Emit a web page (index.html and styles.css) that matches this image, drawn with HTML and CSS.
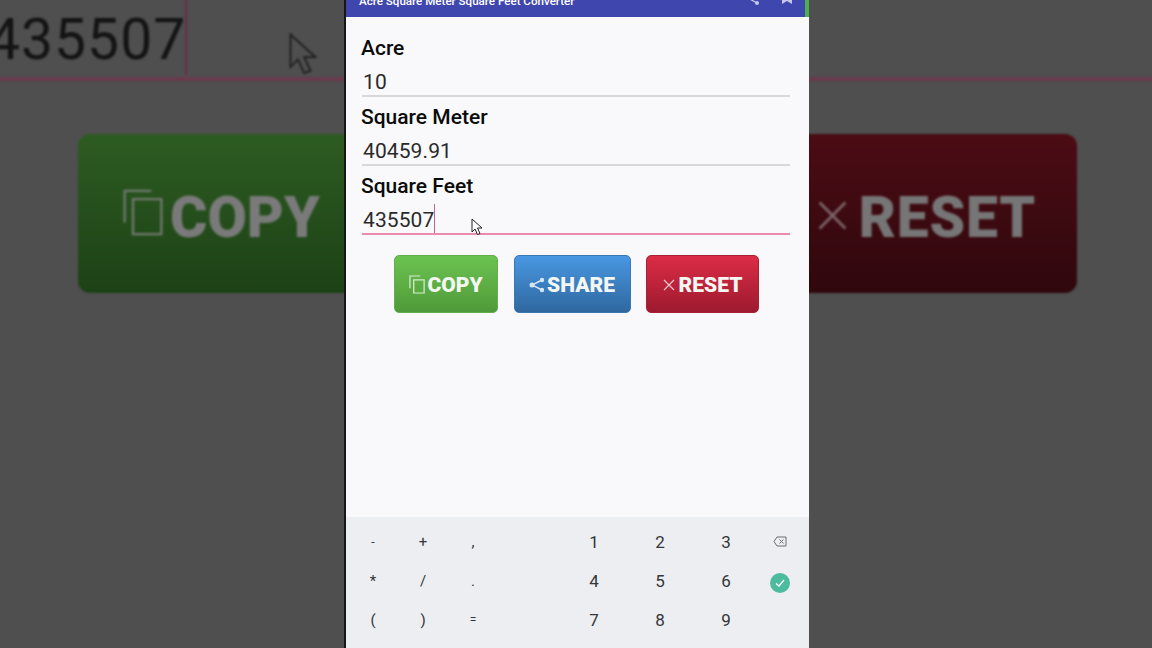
FILE: index.html
```html
<!DOCTYPE html>
<html>
<head>
<meta charset="UTF-8">
<title>Acre Square Meter Square Feet Converter</title>
<link rel="stylesheet" href="styles.css">
</head>
<body>
<div class="stage">

	<!-- blurred, zoomed copy of the app behind the phone -->
	<div class="backdrop">
		<div class="back-field">
			<span class="back-value">435507</span>
			<span class="back-caret"></span>
			<svg class="back-pointer" viewBox="0 0 12 18" width="30" height="45"><path d="M1 1v13l3-3 2.500 5.500 2.500-1-2.500-5.500h4.500z" fill="none" stroke="#1c1c1c" stroke-width=".7"/></svg>
		</div>
		<div class="back-buttons">
			<div class="back-btn back-green">
				<svg class="back-copy-icon" viewBox="0 0 24 28" width="40" height="47"><path d="M1 20V1h16M6 6h17v21H6z" fill="none" stroke="#6f7a6c" stroke-width="1.400"/></svg>
				<span>COPY</span>
			</div>
			<div class="back-btn back-red">
				<svg class="back-x-icon" viewBox="0 0 24 24" width="31" height="31"><path d="M2 2l20 20M22 2L2 22" fill="none" stroke="#7a6266" stroke-width="2.200"/></svg>
				<span>RESET</span>
			</div>
		</div>
	</div>

	<div class="phone">
		<div class="appbar">
			<span class="appbar-title">Acre Square Meter Square Feet Converter</span>
			<svg class="appbar-icon share-icon" viewBox="0 0 16 16" width="16" height="16"><path d="M12 2L3 7l9 5" fill="none" stroke="#c5c8e8" stroke-width="1.300"/><circle cx="12" cy="12" r="2" fill="#c5c8e8"/></svg>
			<svg class="appbar-icon" viewBox="0 0 12 16" width="12" height="16"><path d="M1 0h10v13L6 10l-5 3z" fill="#c5c8e8"/></svg>
		</div>

		<div class="form">
			<div class="field">
				<div class="field-label">Acre</div>
				<div class="field-input">10</div>
			</div>
			<div class="field">
				<div class="field-label">Square Meter</div>
				<div class="field-input">40459.91</div>
			</div>
			<div class="field">
				<div class="field-label">Square Feet</div>
				<div class="field-input active">435507<span class="caret"></span>
					<svg class="pointer" viewBox="0 0 12 18" width="12" height="18"><path d="M1 1v13l3-3 2.500 5.500 2.500-1-2.500-5.500h4.500z" fill="#fff" stroke="#222" stroke-width="1"/></svg>
				</div>
			</div>
		</div>

		<div class="buttons">
			<div class="btn btn-copy">
				<svg viewBox="0 0 18 20" width="17" height="19"><path d="M1 14V1h11M5 5h11v14H5z" fill="none" stroke="#d8eccf" stroke-width="1.300"/></svg>
				<span>COPY</span>
			</div>
			<div class="btn btn-share">
				<svg viewBox="0 0 16 16" width="16" height="16"><path d="M13 3L3 8l10 5" fill="none" stroke="#d5e5f5" stroke-width="1.400"/><circle cx="3" cy="8" r="2.500" fill="#d5e5f5"/><circle cx="13" cy="3" r="2.200" fill="#d5e5f5"/><circle cx="13" cy="13" r="2.200" fill="#d5e5f5"/></svg>
				<span>SHARE</span>
			</div>
			<div class="btn btn-reset">
				<svg viewBox="0 0 12 12" width="12" height="12"><path d="M1 1l10 10M11 1L1 11" fill="none" stroke="#f0c5cc" stroke-width="1.200"/></svg>
				<span>RESET</span>
			</div>
		</div>

		<div class="keyboard">
			<div class="key small">-</div>
			<div class="key sym">+</div>
			<div class="key sym">,</div>
			<div></div>
			<div class="key">1</div>
			<div class="key">2</div>
			<div class="key">3</div>
			<div class="key">
				<svg viewBox="0 0 14 11" width="14" height="11"><path d="M4 1h9v9H4L1 5.500z" fill="none" stroke="#6a6d72" stroke-width="1"/><path d="M6.500 3.500l4 4M10.500 3.500l-4 4" stroke="#6a6d72" stroke-width="1"/></svg>
			</div>

			<div class="key sym">*</div>
			<div class="key sym">/</div>
			<div class="key sym">.</div>
			<div></div>
			<div class="key">4</div>
			<div class="key">5</div>
			<div class="key">6</div>
			<div class="key">
				<span class="done"><svg viewBox="0 0 12 12" width="12" height="12"><path d="M2 6.500l3 2.500 5-6" fill="none" stroke="#fff" stroke-width="1.300"/></svg></span>
			</div>

			<div class="key sym">(</div>
			<div class="key sym">)</div>
			<div class="key small">=</div>
			<div></div>
			<div class="key">7</div>
			<div class="key">8</div>
			<div class="key">9</div>
			<div></div>
		</div>
	</div>
</div>
</body>
</html>
```

FILE: styles.css
```css
html, body {
	margin: 0;
	height: 100%;
}
body {
	background: #4f4f4f;
	font-family: Roboto, "Liberation Sans", sans-serif;
	overflow: hidden;
}
.stage {
	position: relative;
	width: 1152px;
	height: 648px;
	overflow: hidden;
}

/* backdrop */
.backdrop {
	display: flex;
	flex-direction: column;
	height: 100%;
	filter: blur(.8px);
}
.back-field {
	position: relative;
	display: flex;
	height: 77px;
	border-bottom: 4px solid #6b3b4e;
}
.back-value {
	margin-left: -12px;
	font-size: 57px;
	line-height: 80px;
	letter-spacing: 1px;
	color: #141414;
}
.back-caret {
	width: 2px;
	height: 75px;
	margin-left: -1px;
	background: #6b2a45;
}
.back-pointer {
	position: absolute;
	left: 288px;
	top: 32px;
}
.back-buttons {
	display: flex;
	justify-content: space-between;
	margin-top: 53px;
	padding: 0 75px 0 78px;
}
.back-btn {
	display: flex;
	align-items: center;
	height: 159px;
	width: 420px;
	padding-top: 8px;
	border-radius: 12px;
	font-size: 57px;
	font-weight: 900;
	color: #7a7a7a;
	box-sizing: border-box;
}
.back-green {
	padding-left: 45px;
	gap: 7px;
	background: linear-gradient(#2d5c22, #1d4116);
}
.back-red {
	justify-content: flex-end;
	padding-right: 41px;
	gap: 11px;
	background: linear-gradient(#4c0c14, #2f080e);
	color: #767676;
}
.back-red span {
	letter-spacing: .8px;
}
.back-copy-icon {
	margin-top: -10px;
}
.back-x-icon {
	margin-top: -4px;
}

/* phone */
.phone {
	position: absolute;
	left: 344px;
	top: 0;
	bottom: 0;
	width: 465px;
	display: flex;
	flex-direction: column;
	background: #f9f9fb;
	border-left: 2px solid #161616;
	box-sizing: border-box;
}
.appbar {
	display: flex;
	align-items: flex-end;
	flex: none;
	height: 17px;
	padding-left: 13px;
	background: #3f47ae;
	border-right: 4px solid #4caf50;
	overflow: hidden;
}
.appbar-title {
	flex: 1;
	font-size: 11.600px;
	font-weight: 500;
	line-height: 28px;
	height: 28px;
	margin-bottom: 2px;
	color: #fff;
}
.appbar-icon {
	flex: none;
	margin-bottom: 10px;
	margin-right: 12px;
}
.share-icon {
	margin-right: 20px;
}

.form {
	padding: 17px 19px 0 15px;
}
.field-label {
	height: 29px;
	font-size: 21px;
	font-weight: 500;
	line-height: 29px;
	color: #0b0b0b;
}
.field-input {
	position: relative;
	height: 34px;
	margin: 0 0 6px 1px;
	box-sizing: border-box;
	padding: 6px 0 0 1px;
	font-size: 21px;
	line-height: 26px;
	letter-spacing: .1px;
	color: #2a2a2a;
	border-bottom: 2px solid #d8d8d8;
}
.field-input.active {
	border-bottom-color: #ea8aac;
}
.caret {
	display: inline-block;
	width: 1px;
	height: 29px;
	margin-top: -12px;
	vertical-align: -6px;
	background: #c2668c;
}
.pointer {
	position: absolute;
	left: 109px;
	top: 17px;
}

.buttons {
	display: flex;
	margin-top: 14px;
	padding-left: 48px;
	gap: 15.500px;
}
.btn {
	display: flex;
	align-items: center;
	justify-content: center;
	gap: 1px;
	height: 58px;
	padding-top: 1px;
	box-sizing: border-box;
	border-radius: 5px;
	font-size: 21px;
	font-weight: 900;
	color: #f4f6f2;
}
.btn-copy {
	width: 104px;
	background: linear-gradient(#6cc350, #4f9a39);
	border: 1px solid #64ad4c;
}
.btn-share {
	width: 117px;
	gap: 2px;
	background: linear-gradient(#4997e2, #2f689f);
	border: 1px solid #3a77b3;
}
.btn-reset {
	width: 113px;
	gap: 4px;
	background: linear-gradient(#dc2c46, #9d1a2f);
	border: 1px solid #a82236;
}

.keyboard {
	display: grid;
	grid-template-columns: 50px 50px 50px 63px 66px 66px 66px 41px;
	grid-auto-rows: 39px;
	margin-top: auto;
	height: 131px;
	box-sizing: border-box;
	padding: 5px 0 0 2px;
	background: #eceef1;
}
.key {
	display: flex;
	align-items: center;
	justify-content: center;
	font-size: 17px;
	color: #33363a;
}
.key.sym {
	font-size: 15px;
}
.key.small {
	font-size: 12px;
}
.done {
	display: flex;
	align-items: center;
	justify-content: center;
	width: 20px;
	height: 20px;
	margin-top: 4px;
	border-radius: 50%;
	background: #4dbb9d;
}
```
